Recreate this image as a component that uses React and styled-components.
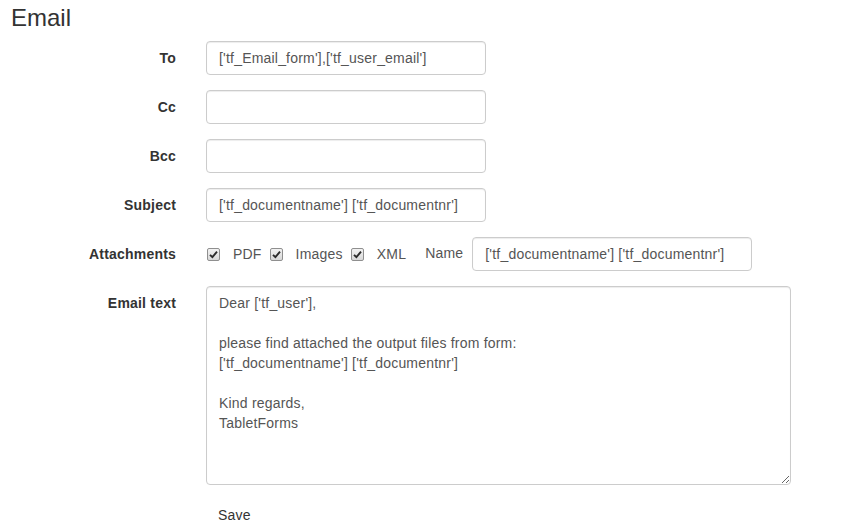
import styled, { createGlobalStyle } from "styled-components";

const GlobalStyle = createGlobalStyle`
  body {
    margin: 0;
    background: #ffffff;
    font-family: "Liberation Sans", Arial, sans-serif;
    font-size: 14px;
    line-height: 20px;
    letter-spacing: 0.2px;
    color: #333333;
  }
`;

const Page = styled.div`
  padding: 5px 0 0 11px;
`;

const Title = styled.h3`
  margin: 0 0 10px;
  font-size: 24px;
  line-height: 26px;
  font-weight: 400;
  letter-spacing: 0;
  color: #333333;
`;

const Form = styled.form`
  display: flex;
  flex-direction: column;
  gap: 15px;
`;

const Row = styled.div`
  display: grid;
  grid-template-columns: 165px 1fr;
  column-gap: 30px;
  align-items: start;
`;

const Label = styled.label`
  text-align: right;
  font-weight: 700;
  padding-top: 7px;
  line-height: 20px;
`;

const Input = styled.input`
  box-sizing: border-box;
  width: ${(p) => p.$width || 280}px;
  height: 34px;
  padding: 6px 12px;
  border: 1px solid #cccccc;
  border-radius: 4px;
  font-family: inherit;
  font-size: 14px;
  letter-spacing: 0.2px;
  color: #555555;
  background: #ffffff;
  outline: none;
  box-shadow: inset 0 1px 1px rgba(0, 0, 0, 0.075);
`;

const TextArea = styled.textarea`
  box-sizing: border-box;
  display: block;
  width: 585px;
  height: 199px;
  padding: 6px 12px;
  border: 1px solid #cccccc;
  border-radius: 4px;
  font-family: inherit;
  font-size: 14px;
  line-height: 20px;
  letter-spacing: 0.2px;
  color: #555555;
  outline: none;
  box-shadow: inset 0 1px 1px rgba(0, 0, 0, 0.075);
`;

const Attach = styled.div`
  display: flex;
  align-items: center;
  height: 34px;
`;

const CheckOption = styled.label`
  display: flex;
  align-items: center;
  color: #555555;
  margin-right: 7px;
`;

const Box = styled.span`
  box-sizing: border-box;
  width: 13px;
  height: 13px;
  margin: 1px 13px 0 1px;
  border: 1px solid #8f8f8f;
  border-radius: 2px;
  background: linear-gradient(#f2f2f2, #d8d8d8);
  display: flex;
  align-items: center;
  justify-content: center;
`;

const NameLabel = styled.span`
  color: #555555;
  margin: -2px 9px 0 12px;
`;

const SaveButton = styled.button`
  justify-self: start;
  margin-top: -1px;
  padding: 6px 12px;
  border: none;
  background: none;
  font-family: inherit;
  font-size: 14px;
  line-height: 20px;
  letter-spacing: 0.2px;
  color: #333333;
  cursor: pointer;
`;

const Check = ({ label }) => (
  <CheckOption>
    <Box>
      <svg width="9" height="9" viewBox="0 0 9 9">
        <path
          d="M1 4.8 L3.4 7.2 L8 1.6"
          fill="none"
          stroke="#2b2b2b"
          strokeWidth="1.9"
        />
      </svg>
    </Box>
    {label}
  </CheckOption>
);

const emailText = `Dear ['tf_user'],

please find attached the output files from form:
['tf_documentname'] ['tf_documentnr']

Kind regards,
TabletForms`;

const App = () => {
  return (
    <Page>
      <GlobalStyle />
      <Title>Email</Title>
      <Form onSubmit={(e) => e.preventDefault()}>
        <Row>
          <Label>To</Label>
          <Input defaultValue="['tf_Email_form'],['tf_user_email']" />
        </Row>
        <Row>
          <Label>Cc</Label>
          <Input />
        </Row>
        <Row>
          <Label>Bcc</Label>
          <Input />
        </Row>
        <Row>
          <Label>Subject</Label>
          <Input defaultValue="['tf_documentname'] ['tf_documentnr']" />
        </Row>
        <Row>
          <Label>Attachments</Label>
          <Attach>
            <Check label="PDF" />
            <Check label="Images" />
            <Check label="XML" />
            <NameLabel>Name</NameLabel>
            <Input defaultValue="['tf_documentname'] ['tf_documentnr']" />
          </Attach>
        </Row>
        <Row>
          <Label>Email text</Label>
          <TextArea defaultValue={emailText} />
        </Row>
        <Row>
          <span />
          <SaveButton type="submit">Save</SaveButton>
        </Row>
      </Form>
    </Page>
  );
};

export default App;
